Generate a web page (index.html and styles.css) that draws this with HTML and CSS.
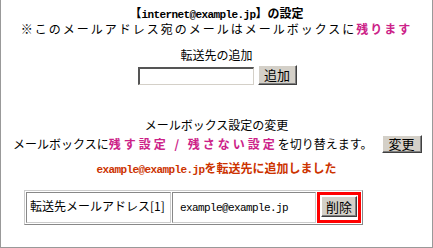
FILE: index.html
```html
<!DOCTYPE html>
<html lang="ja">
<head>
<meta charset="utf-8">
<link rel="stylesheet" href="styles.css">
</head>
<body>
<div class="frame">
  <div class="title">【<span class="mono">internet@example.jp</span>】の設定</div>
  <div class="notice">※このメールアドレス宛のメールはメールボックスに<span class="pink">残ります</span></div>

  <div class="label add-label">転送先の追加</div>
  <div class="add-row">
    <input class="field" type="text">
    <button class="btn btn-add">追加</button>
  </div>

  <div class="label change-label">メールボックス設定の変更</div>
  <div class="switch-row">
    <span class="switch-text">メールボックスに<span class="pink sp">残す設定 / 残さない設定</span>を切り替えます。</span>
    <button class="btn btn-change">変更</button>
  </div>

  <div class="message"><span class="mono">example@example.jp</span>を転送先に追加しました</div>

  <table class="list">
    <tr>
      <td class="c-label">転送先メールアドレス[1]</td>
      <td class="c-addr"><span class="mono">example@example.jp</span></td>
      <td class="c-del"><button class="btn btn-del">削除</button></td>
    </tr>
  </table>
</div>
</body>
</html>
```

FILE: styles.css
```css
html, body {
  margin: 0;
  padding: 0;
  background: #fff;
}
body {
  font-family: "Noto Sans CJK JP", "Noto Sans", sans-serif;
  font-size: 12px;
  color: #000;
}
.frame {
  box-sizing: border-box;
  width: 433px;
  height: 248px;
  border: 1px solid #999;
  border-top: none;
  display: flex;
  flex-direction: column;
  align-items: center;
  padding-top: 5px;
}
.mono {
  font-family: "Liberation Mono", "DejaVu Sans Mono", monospace;
  font-size: 11px;
  letter-spacing: -0.6px;
}
.title {
  font-weight: bold;
  line-height: 15px;
  height: 15px;
}
.notice {
  line-height: 16px;
  letter-spacing: 2px;
  margin-top: 1px;
}
.pink {
  color: #cc2288;
  font-weight: bold;
}
.label {
  line-height: 14px;
}
.add-label {
  margin-top: 11px;
}
.add-row {
  display: flex;
  align-items: flex-end;
  gap: 4px;
  margin-top: 3px;
  margin-left: 1px;
}
.field {
  box-sizing: border-box;
  width: 116px;
  height: 18px;
  margin: 0;
  padding: 0;
  border-style: solid;
  border-width: 2px 1px 1px 2px;
  border-color: #555 #d4d0c8 #d4d0c8 #555;
  background: #fff;
}
.btn {
  box-sizing: border-box;
  margin: 0;
  padding: 0;
  font-family: "Noto Sans CJK JP", sans-serif;
  font-size: 12px;
  color: #000;
  background: #d4d0c8;
  border-style: solid;
  border-width: 1px;
  border-color: #fff #404040 #404040 #fff;
  box-shadow: inset -1px -1px 0 #808080;
  line-height: 16px;
}
.btn-add {
  width: 39px;
  height: 20px;
  font-size: 13px;
}
.change-label {
  margin-top: 33px;
}
.switch-row {
  display: flex;
  align-items: center;
  align-self: stretch;
  padding-left: 12px;
  margin-top: 3px;
  gap: 9px;
}
.switch-text {
  line-height: 16px;
}
.sp {
  letter-spacing: 3px;
}
.btn-change {
  width: 40px;
  height: 18px;
  font-size: 13px;
}
.message {
  margin-top: 8px;
  color: #cc3300;
  font-weight: bold;
  line-height: 14px;
}
.list {
  align-self: flex-start;
  margin-left: 23px;
  margin-top: 13px;
  border-collapse: separate;
  border-spacing: 1px;
  border-style: solid;
  border-width: 1px;
  border-color: #ccc #888 #888 #ccc;
}
.list td {
  vertical-align: top;
  border-style: solid;
  border-width: 1px;
  border-color: #888 #ccc #ccc #888;
  padding: 6px 3px 0 3px;
  line-height: 14px;
}
.c-label {
  width: 137px;
}
.c-addr {
  width: 132px;
  padding-left: 7px !important;
}
.list td.c-del {
  border: 3px solid #ff0000;
  padding: 1px 1px 3px 1px;
}
.btn-del {
  display: block;
  width: 36px;
  height: 21px;
  font-size: 13px;
}
```
